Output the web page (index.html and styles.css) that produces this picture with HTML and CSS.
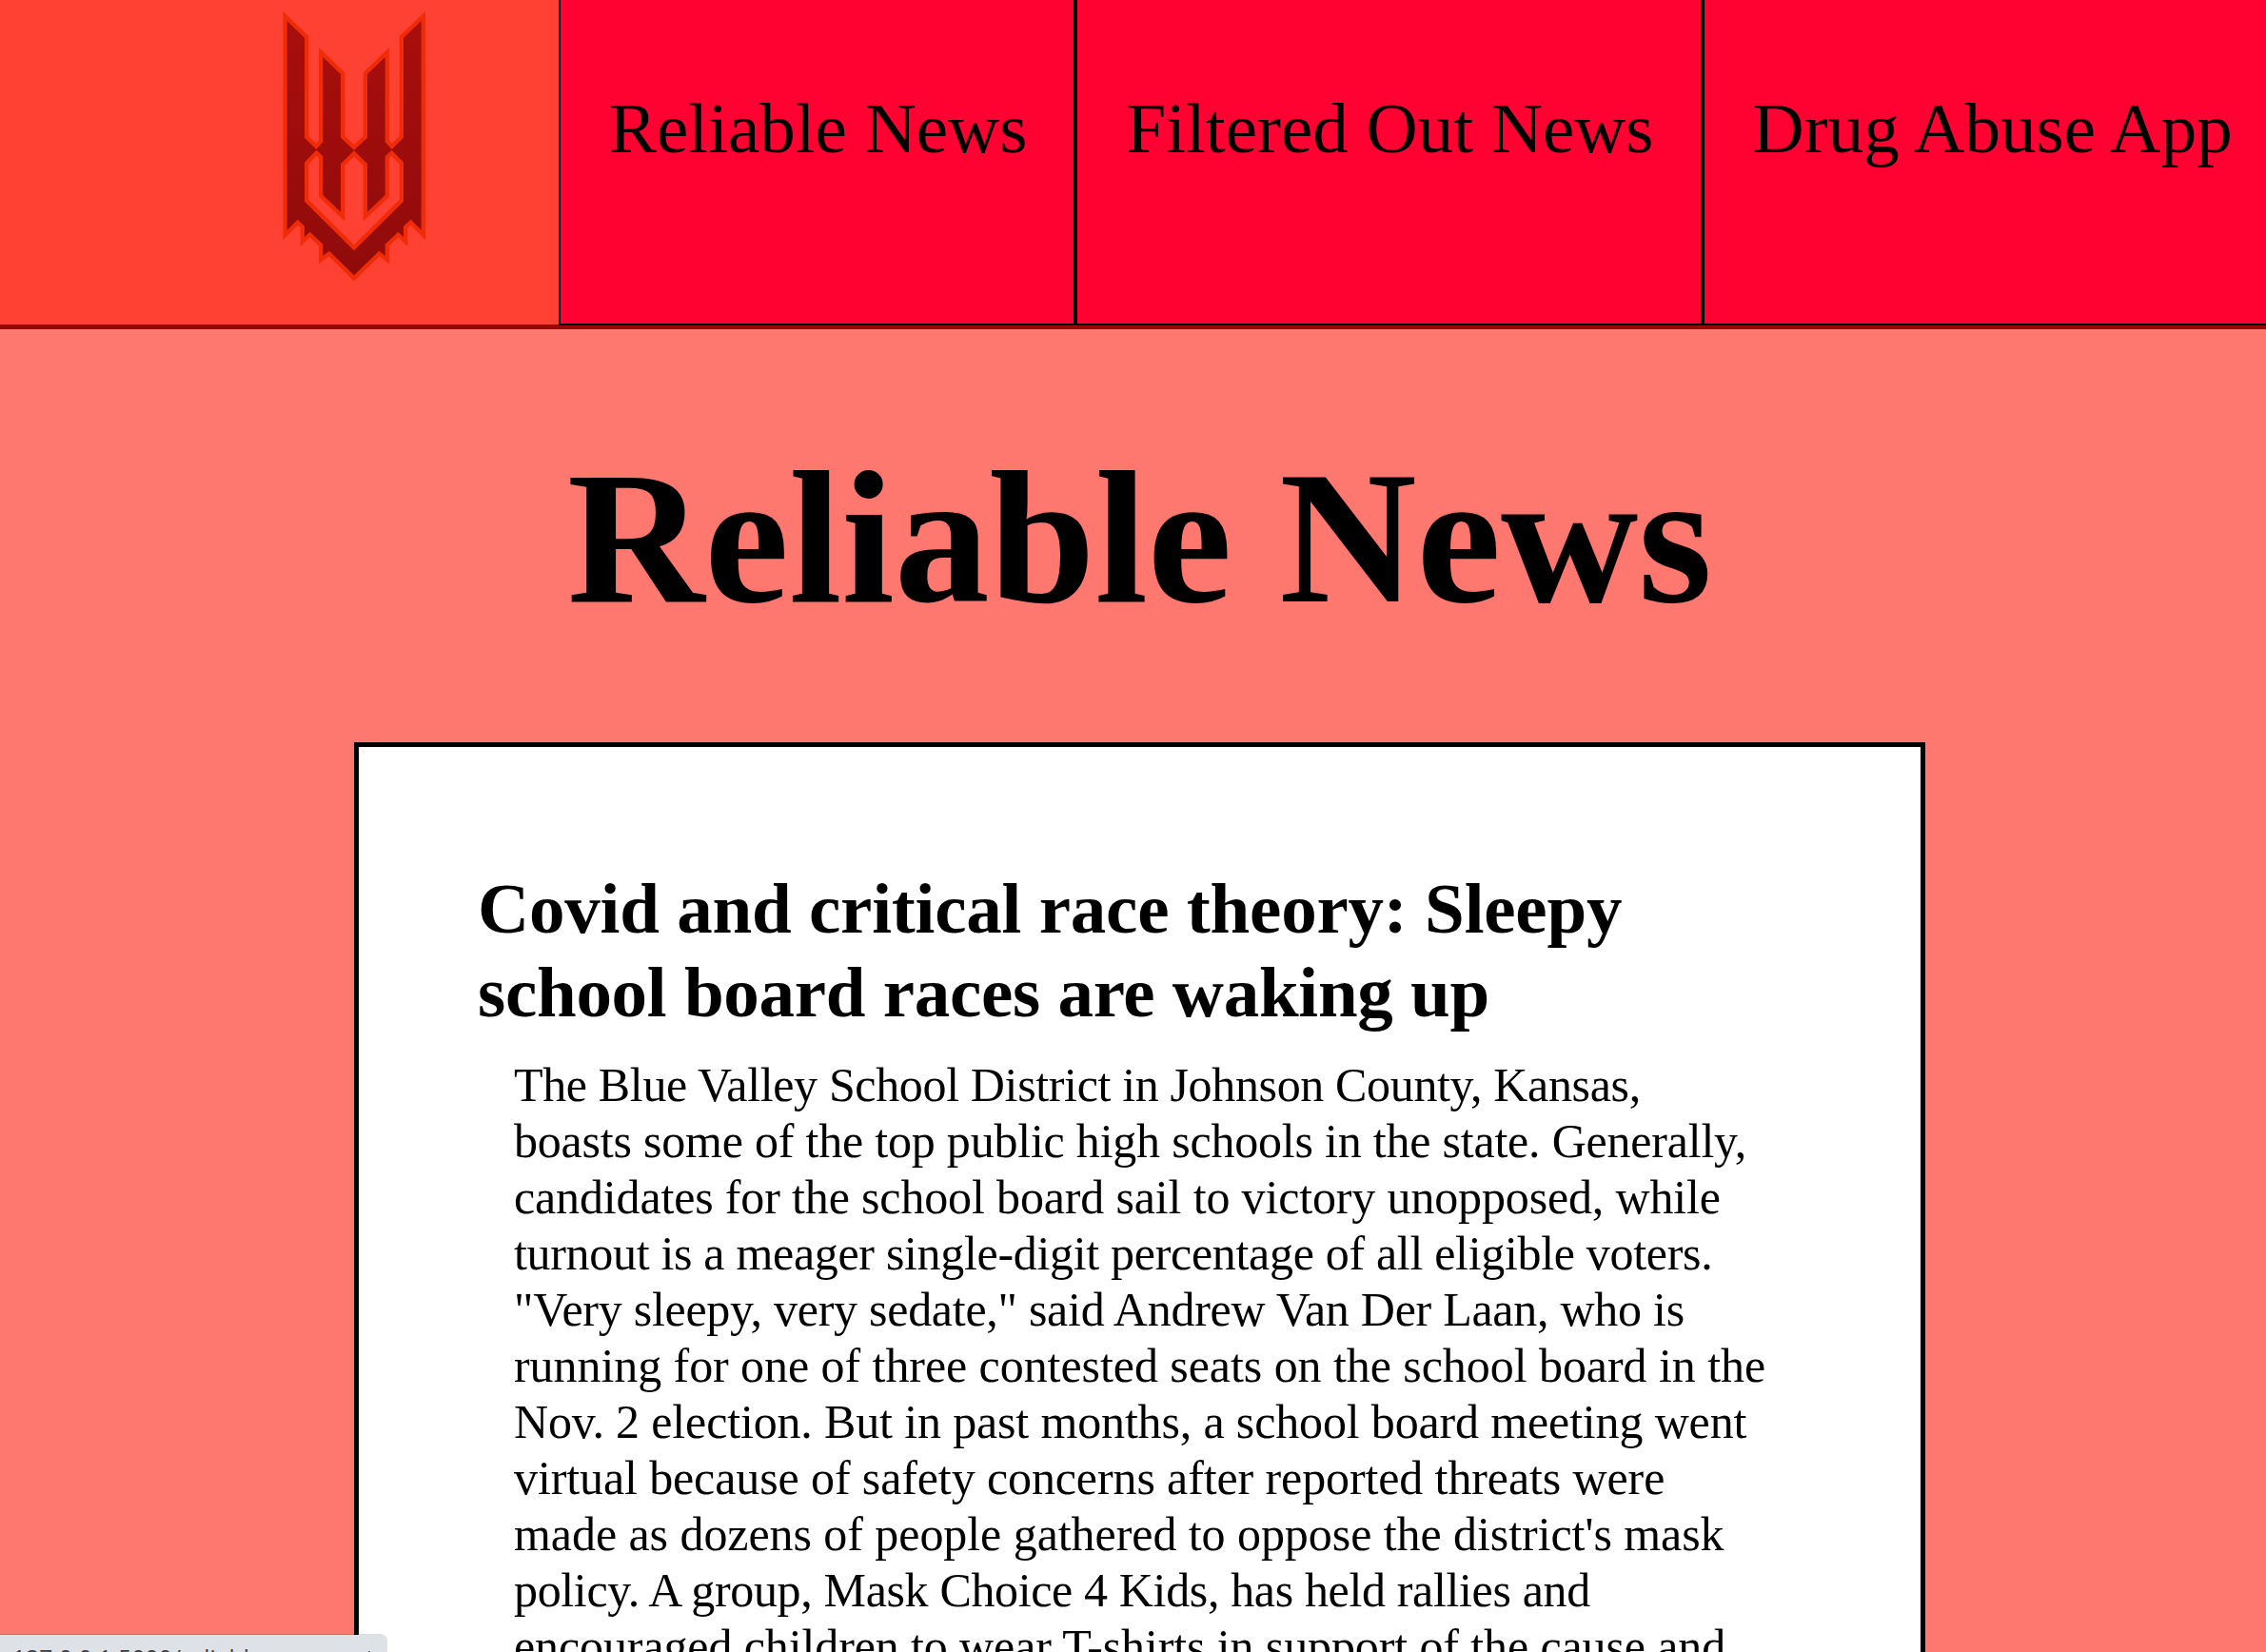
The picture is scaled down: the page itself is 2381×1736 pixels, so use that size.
FILE: index.html
```
<!DOCTYPE html>
<html lang="en">
<head>
<meta charset="utf-8">
<title>Reliable News</title>
<link rel="stylesheet" href="styles.css">
</head>
<body>
<div class="screen">
<header class="header">
  <a class="brand" aria-label="Home">
    <svg class="logo" viewBox="0 0 600 900">
      <defs>
        <linearGradient id="crest" x1="0" y1="66" x2="0" y2="868" gradientUnits="userSpaceOnUse">
          <stop offset="0" stop-color="#a90e0c"/>
          <stop offset="1" stop-color="#900b0b"/>
        </linearGradient>
      </defs>
      <path class="crest" fill="url(#crest)" fill-rule="evenodd" d="M95 66L150 119V434L187 471L208 448V180L264 234V434L306 473L348 434V234L404 180V448L425 471L462 434V119L518 66V725L485 692L462 713V747L445 731L404 770V806L385 791L306 868L228 791L208 806V770L167 731L150 747V713L128 692L95 725Z M187 473L150 512V635L306 790L462 635V512L425 473L404 493V615L348 668V517L306 475L264 517V668L208 615V493Z"/>
    </svg>
  </a>
  <nav class="nav">
    <a class="nav-item">Reliable News</a>
    <a class="nav-item">Filtered Out News</a>
    <a class="nav-item">Drug Abuse App</a>
  </nav>
</header>
<main class="page">
  <h1 class="title">Reliable News</h1>
  <article class="card">
    <h2 class="headline"><span class="t4">Covid and critical race theory: Sleepy</span><br><span class="t5">school board races are waking up</span></h2>
    <p class="story"><span class="t7">The Blue Valley School District in Johnson County, Kansas,</span><br><span class="t4">boasts some of the top public high schools in the state. Generally,</span><br><span class="t3">candidates for the school board sail to victory unopposed, while</span><br><span class="t6">turnout is a meager single-digit percentage of all eligible voters.</span><br><span class="t5">"Very sleepy, very sedate," said Andrew Van Der Laan, who is</span><br><span class="t1">running for one of three contested seats on the school board in the</span><br><span class="t3">Nov. 2 election. But in past months, a school board meeting went</span><br><span class="t2">virtual because of safety concerns after reported threats were</span><br><span class="t1">made as dozens of people gathered to oppose the district's mask</span><br><span class="t7">policy. A group, Mask Choice 4 Kids, has held rallies and</span><br><span class="t2">encouraged children to wear T-shirts in support of the cause and</span></p>
  </article>
</main>
<div class="status">127.0.0.1:5000/reliable_newscast</div>
</div>
</body>
</html>
```
FILE: styles.css
```
body {
  margin: 0;
  background: #ff786f;
  color: #000;
  font-family: "Liberation Serif", "Times New Roman", serif;
}
.screen {
  position: relative;
  height: 1736px;
  overflow: hidden;
}
.header {
  display: flex;
  height: 341px;
  background: #ff4133;
  border-bottom: 5px solid #960800;
}
.brand {
  box-sizing: border-box;
  flex: 0 0 587px;
  padding-left: 270px;
}
.logo {
  display: block;
  width: 200px;
  height: 300px;
}
.crest {
  stroke: #f02c08;
  stroke-width: 26;
  paint-order: stroke;
}
.nav {
  display: flex;
  flex: 1;
  min-width: 0;
  height: 342px;
}
.nav-item {
  box-sizing: border-box;
  flex: none;
  padding: 92px 49px 0 51px;
  border: 2px solid #000;
  border-top: 0;
  background: #ff0232;
  font-size: 75px;
  line-height: 86px;
  white-space: nowrap;
}
.nav-item:last-child {
  flex: 1 0 auto;
}
.page {
  display: flex;
  flex-direction: column;
  align-items: center;
  width: 2395px;
}
.title {
  margin: 104px 0 100px;
  font-size: 200px;
  line-height: 230px;
  letter-spacing: -.2px;
}
.card {
  box-sizing: border-box;
  width: 1651px;
  height: 1100px;
  padding: 126px 125px 0;
  border: 5px solid #000;
  background: #fff;
  white-space: nowrap;
}
.headline {
  margin: 0;
  font-size: 75px;
  line-height: 88px;
}
.story {
  margin: 24px 0 0 38px;
  font-size: 50px;
  line-height: 59px;
}
/* Per-line tracking steps */
.t1 { letter-spacing: -.06px; }
.t2 { letter-spacing: -.11px; }
.t3 { letter-spacing: -.15px; }
.t4 { letter-spacing: -.21px; }
.t5 { letter-spacing: -.27px; }
.t6 { letter-spacing: -.31px; }
.t7 { letter-spacing: -.35px; }
.status {
  position: absolute;
  left: 0;
  bottom: 0;
  box-sizing: border-box;
  width: 407px;
  height: 18px;
  padding: 7px 0 0 13px;
  border-radius: 0 8px 0 0;
  box-shadow: 0 -1px 1px rgba(0, 0, 0, .15);
  background: #dee1e6;
  color: #3c4043;
  font: 24.5px/33px "Open Sans", "Noto Sans", sans-serif;
  letter-spacing: .15px;
  white-space: nowrap;
  overflow: hidden;
}
```
